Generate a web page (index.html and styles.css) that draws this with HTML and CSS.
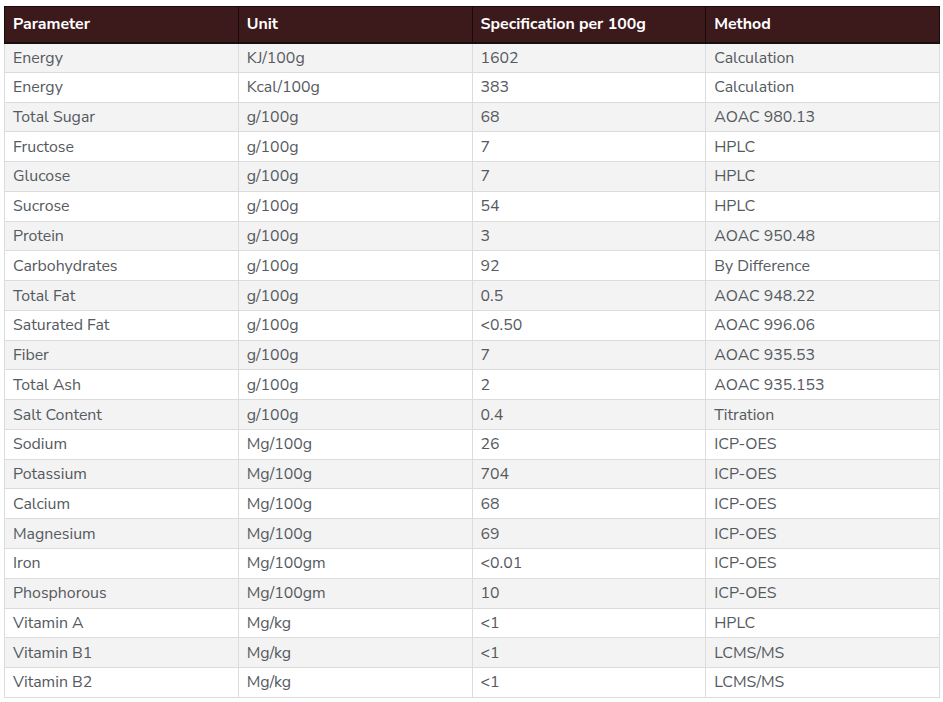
FILE: index.html
```
<!DOCTYPE html>
<html>
<head>
<meta charset="utf-8">
<link rel="stylesheet" href="styles.css">
</head>
<body>
<table class="spec">
<thead>
<tr><th>Parameter</th><th>Unit</th><th>Specification per 100g</th><th>Method</th></tr>
</thead>
<tbody>
<tr><td>Energy</td><td>KJ/100g</td><td>1602</td><td>Calculation</td></tr>
<tr><td>Energy</td><td>Kcal/100g</td><td>383</td><td>Calculation</td></tr>
<tr><td>Total Sugar</td><td>g/100g</td><td>68</td><td>AOAC 980.13</td></tr>
<tr><td>Fructose</td><td>g/100g</td><td>7</td><td>HPLC</td></tr>
<tr><td>Glucose</td><td>g/100g</td><td>7</td><td>HPLC</td></tr>
<tr><td>Sucrose</td><td>g/100g</td><td>54</td><td>HPLC</td></tr>
<tr><td>Protein</td><td>g/100g</td><td>3</td><td>AOAC 950.48</td></tr>
<tr><td>Carbohydrates</td><td>g/100g</td><td>92</td><td>By Difference</td></tr>
<tr><td>Total Fat</td><td>g/100g</td><td>0.5</td><td>AOAC 948.22</td></tr>
<tr><td>Saturated Fat</td><td>g/100g</td><td>&lt;0.50</td><td>AOAC 996.06</td></tr>
<tr><td>Fiber</td><td>g/100g</td><td>7</td><td>AOAC 935.53</td></tr>
<tr><td>Total Ash</td><td>g/100g</td><td>2</td><td>AOAC 935.153</td></tr>
<tr><td>Salt Content</td><td>g/100g</td><td>0.4</td><td>Titration</td></tr>
<tr><td>Sodium</td><td>Mg/100g</td><td>26</td><td>ICP-OES</td></tr>
<tr><td>Potassium</td><td>Mg/100g</td><td>704</td><td>ICP-OES</td></tr>
<tr><td>Calcium</td><td>Mg/100g</td><td>68</td><td>ICP-OES</td></tr>
<tr><td>Magnesium</td><td>Mg/100g</td><td>69</td><td>ICP-OES</td></tr>
<tr><td>Iron</td><td>Mg/100gm</td><td>&lt;0.01</td><td>ICP-OES</td></tr>
<tr><td>Phosphorous</td><td>Mg/100gm</td><td>10</td><td>ICP-OES</td></tr>
<tr><td>Vitamin A</td><td>Mg/kg</td><td>&lt;1</td><td>HPLC</td></tr>
<tr><td>Vitamin B1</td><td>Mg/kg</td><td>&lt;1</td><td>LCMS/MS</td></tr>
<tr><td>Vitamin B2</td><td>Mg/kg</td><td>&lt;1</td><td>LCMS/MS</td></tr>
</tbody>
</table>
</body>
</html>
```
FILE: styles.css
```
html, body {
  margin: 0;
  padding: 0;
  background: #ffffff;
}
body {
  padding: 6px 3px 0 4px;
  font-family: "Nunito Sans", "Lato", "Open Sans", sans-serif;
}
.spec {
  width: 936px;
  border-collapse: collapse;
  table-layout: fixed;
  font-size: 15.9px;
  color: #555a5f;
  border: 1px solid #d0d0d0;
}
.spec th {
  background: #3c1a1c;
  color: #ffffff;
  font-weight: 700;
  text-align: left;
  padding: 0 8px;
  height: 36px;
  box-sizing: border-box;
  border: 1px solid #1a0a0b;
  border-bottom: 2px solid #111;
}
.spec td {
  padding: 0 8px;
  height: 29.77px;
  box-sizing: border-box;
  border: 1px solid #dcdcdc;
  vertical-align: middle;
}
.spec tbody tr:nth-child(odd) td {
  background: #f3f3f3;
}
.spec tbody tr:nth-child(even) td {
  background: #ffffff;
}
```
